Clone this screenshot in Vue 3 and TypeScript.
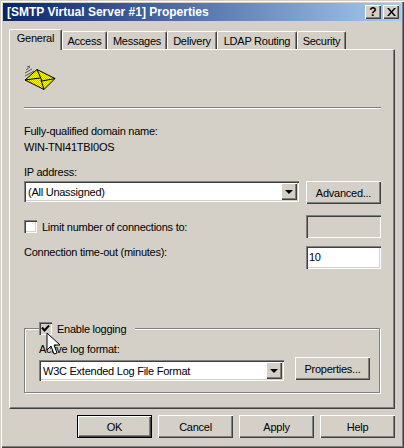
<template>
  <div class="window">
    <div class="titlebar">
      <span class="title">[SMTP Virtual Server #1] Properties</span>
      <div class="title-buttons">
        <button class="caption-btn help">?</button>
        <button class="caption-btn">
          <svg width="9" height="8" viewBox="0 0 9 8">
            <path d="M0 0h2l2.500 3 2.500-3h2L5.500 4 9 8H7L4.500 5 2 8H0l3.500-4z" fill="#000" />
          </svg>
        </button>
      </div>
    </div>

    <div class="content">
      <div class="tabs">
        <div
          v-for="tab in tabs"
          :key="tab.label"
          class="tab"
          :class="{ active: tab.label === 'General' }"
          :style="{ width: tab.width + 'px' }"
        >
          {{ tab.label }}
        </div>
      </div>

      <div class="panel">
        <svg class="mail-icon" width="32" height="26" viewBox="0 0 32 26">
          <defs>
            <pattern id="dither" width="2" height="2" patternUnits="userSpaceOnUse">
              <rect width="2" height="2" fill="#ffff00" />
              <rect width="1" height="1" fill="#b4b47c" />
              <rect x="1" y="1" width="1" height="1" fill="#b4b47c" />
            </pattern>
          </defs>
          <path d="M1 15 13 4.500 31 13.500 20 24.500z" fill="url(#dither)" stroke="#000" stroke-width="1" />
          <path d="M13 4.500 18 16 31 13.500M1 15 16 13M20 24.500 17 15" fill="none" stroke="#000" stroke-width="1" />
          <path d="M2 5 6 2M1 8 8 4M1 11 10 6M3 2 6 1" stroke="#555" stroke-width="1" fill="none" />
        </svg>
        <div class="separator"></div>

        <div class="label domain-label">Fully-qualified domain name:</div>
        <div class="label domain-value">WIN-TNI41TBI0OS</div>

        <div class="label ip-label">IP address:</div>
        <div class="row ip-row">
          <div class="combo ip-combo">
            <span class="combo-text">(All Unassigned)</span>
            <span class="combo-arrow"><i></i></span>
          </div>
          <button class="btn">Advanced...</button>
        </div>

        <div class="row limit-row">
          <label class="check">
            <span class="check-box"></span>
            <span>Limit number of connections to:</span>
          </label>
          <div class="textbox disabled"></div>
        </div>

        <div class="row timeout-row">
          <div class="label">Connection time-out (minutes):</div>
          <div class="textbox">10</div>
        </div>

        <div class="group">
          <label class="check legend">
            <span class="check-box checked">
              <svg width="9" height="9" viewBox="0 0 9 9">
                <path d="M1 3.500 3.500 6.500 8 1.500" fill="none" stroke="#000" stroke-width="2" />
              </svg>
            </span>
            <span>Enable logging</span>
          </label>
          <div class="label format-label">Active log format:</div>
          <div class="row format-row">
            <div class="combo format-combo">
              <span class="combo-text">W3C Extended Log File Format</span>
              <span class="combo-arrow"><i></i></span>
            </div>
            <button class="btn">Properties...</button>
          </div>
        </div>
      </div>

      <div class="footer">
        <button class="btn default">OK</button>
        <button class="btn">Cancel</button>
        <button class="btn">Apply</button>
        <button class="btn">Help</button>
      </div>
    </div>

    <svg class="cursor" width="15" height="24" viewBox="0 0 15 24">
      <path d="M1 1V18L5 14 8 22 11 21 8 13H14z" fill="#fff" stroke="#000" stroke-width="1" />
    </svg>
  </div>
</template>

<script setup lang="ts">
interface Tab {
  label: string
  width: number
}

const tabs: Tab[] = [
  { label: 'General', width: 53 },
  { label: 'Access', width: 45 },
  { label: 'Messages', width: 60 },
  { label: 'Delivery', width: 50 },
  { label: 'LDAP Routing', width: 80 },
  { label: 'Security', width: 49 },
]
</script>

<style>
html,
body {
  margin: 0;
  background: #d4d0c8;
}
</style>

<style scoped>
.window {
  position: relative;
  width: 404px;
  height: 448px;
  box-sizing: border-box;
  padding: 3px;
  background: #d4d0c8;
  box-shadow: inset 1px 1px 0 #d4d0c8, inset 2px 2px 0 #fff, inset -1px -1px 0 #404040, inset -2px -2px 0 #808080;
  font-family: "Liberation Sans", Arial, sans-serif;
  font-size: 11px;
  letter-spacing: -0.25px;
  color: #000;
  overflow: hidden;
}

.titlebar {
  display: flex;
  align-items: center;
  justify-content: space-between;
  height: 18px;
  padding: 0 2px 0 4px;
  background: linear-gradient(90deg, #0a246a, #a6caf0);
}

.title {
  color: #fff;
  font-weight: bold;
  font-size: 12px;
  letter-spacing: 0;
}

.title-buttons {
  display: flex;
  gap: 2px;
}

.caption-btn {
  display: flex;
  align-items: center;
  justify-content: center;
  width: 16px;
  height: 14px;
  padding: 0;
  border: none;
  background: #d4d0c8;
  font-family: "Liberation Sans", sans-serif;
  font-size: 12px;
  font-weight: bold;
  box-shadow: inset 1px 1px 0 #fff, inset -1px -1px 0 #404040, inset -2px -2px 0 #808080;
}

.content {
  padding: 8px 6px 0 6px;
}

.tabs {
  display: flex;
  height: 20px;
  padding-left: 1px;
  align-items: flex-end;
}

.tab {
  box-sizing: border-box;
  height: 18px;
  line-height: 19px;
  text-align: center;
  white-space: nowrap;
  border-top: 1px solid #fff;
  border-left: 1px solid #fff;
  border-right: 1px solid #404040;
  border-radius: 2px 2px 0 0;
  box-shadow: inset -1px 0 0 #808080;
}

.tab.active {
  position: relative;
  z-index: 1;
  height: 21px;
  margin-bottom: -1px;
  margin-left: -1px;
  line-height: 17px;
  background: #d4d0c8;
}

.panel {
  box-sizing: border-box;
  width: 386px;
  height: 360px;
  padding: 0 14px 0 14px;
  border-top: 1px solid #fff;
  border-left: 1px solid #fff;
  border-right: 1px solid #404040;
  border-bottom: 1px solid #404040;
  box-shadow: inset -1px -1px 0 #808080;
}

.mail-icon {
  display: block;
  margin: 15px 0 0 0;
}

.separator {
  height: 1px;
  margin-top: 16px;
  background: #808080;
  box-shadow: 0 1px 0 #fff;
  width: 357px;
}

.label {
  height: 13px;
  line-height: 13px;
  white-space: nowrap;
}

.domain-label {
  margin-top: 17px;
}

.domain-value {
  margin-top: 3px;
}

.ip-label {
  margin-top: 12px;
}

.row {
  display: flex;
  justify-content: space-between;
  align-items: flex-start;
  width: 357px;
}

.ip-row {
  margin-top: 2px;
}

.limit-row {
  margin-top: 11px;
}

.timeout-row {
  margin-top: 8px;
}

.btn {
  box-sizing: border-box;
  width: 75px;
  height: 23px;
  padding: 0;
  border: none;
  background: #d4d0c8;
  font: inherit;
  letter-spacing: inherit;
  color: #000;
  box-shadow: inset 1px 1px 0 #fff, inset -1px -1px 0 #404040, inset -2px -2px 0 #808080;
}

.btn.default {
  border: 1px solid #000;
  box-shadow: inset 1px 1px 0 #fff, inset -1px -1px 0 #404040, inset -2px -2px 0 #808080;
}

.combo {
  display: flex;
  align-items: center;
  justify-content: space-between;
  box-sizing: border-box;
  height: 21px;
  padding: 2px;
  background: #fff;
  box-shadow: inset 1px 1px 0 #808080, inset 2px 2px 0 #404040, inset -1px -1px 0 #fff, inset -2px -2px 0 #d4d0c8;
}

.ip-combo {
  width: 275px;
}

.format-combo {
  width: 245px;
  margin-top: 3px;
}

.combo-text {
  padding-left: 2px;
  white-space: nowrap;
}

.combo-arrow {
  display: flex;
  align-items: center;
  justify-content: center;
  width: 16px;
  height: 17px;
  background: #d4d0c8;
  box-shadow: inset 1px 1px 0 #fff, inset -1px -1px 0 #404040, inset -2px -2px 0 #808080;
}

.combo-arrow i {
  display: block;
  width: 0;
  height: 0;
  border-left: 4px solid transparent;
  border-right: 4px solid transparent;
  border-top: 4px solid #000;
}

.textbox {
  box-sizing: border-box;
  width: 75px;
  height: 23px;
  padding: 2px 0 0 3px;
  line-height: 19px;
  background: #fff;
  box-shadow: inset 1px 1px 0 #808080, inset 2px 2px 0 #404040, inset -1px -1px 0 #fff, inset -2px -2px 0 #d4d0c8;
}

.textbox.disabled {
  background: #d4d0c8;
}

.check {
  display: flex;
  align-items: center;
  gap: 5px;
  height: 23px;
  white-space: nowrap;
}

.check-box {
  display: flex;
  align-items: center;
  justify-content: center;
  box-sizing: border-box;
  width: 13px;
  height: 13px;
  background: #fff;
  box-shadow: inset 1px 1px 0 #808080, inset 2px 2px 0 #404040, inset -1px -1px 0 #fff, inset -2px -2px 0 #d4d0c8;
}

.check-box.checked {
  background: #d4d0c8;
}

.group {
  position: relative;
  box-sizing: border-box;
  width: 356px;
  height: 65px;
  margin-top: 59px;
  padding: 14px 10px 0 14px;
  border: 1px solid #808080;
  box-shadow: 1px 1px 0 #fff, inset 1px 1px 0 #fff;
}

.legend {
  position: absolute;
  top: -7px;
  left: 14px;
  height: 13px;
  padding-right: 9px;
  background: #d4d0c8;
}

.format-row {
  width: 331px;
  margin-top: 1px;
}

.footer {
  display: flex;
  justify-content: flex-end;
  gap: 6px;
  width: 386px;
  margin-top: 6px;
}

.cursor {
  position: absolute;
  top: 332px;
  left: 46px;
}
</style>
